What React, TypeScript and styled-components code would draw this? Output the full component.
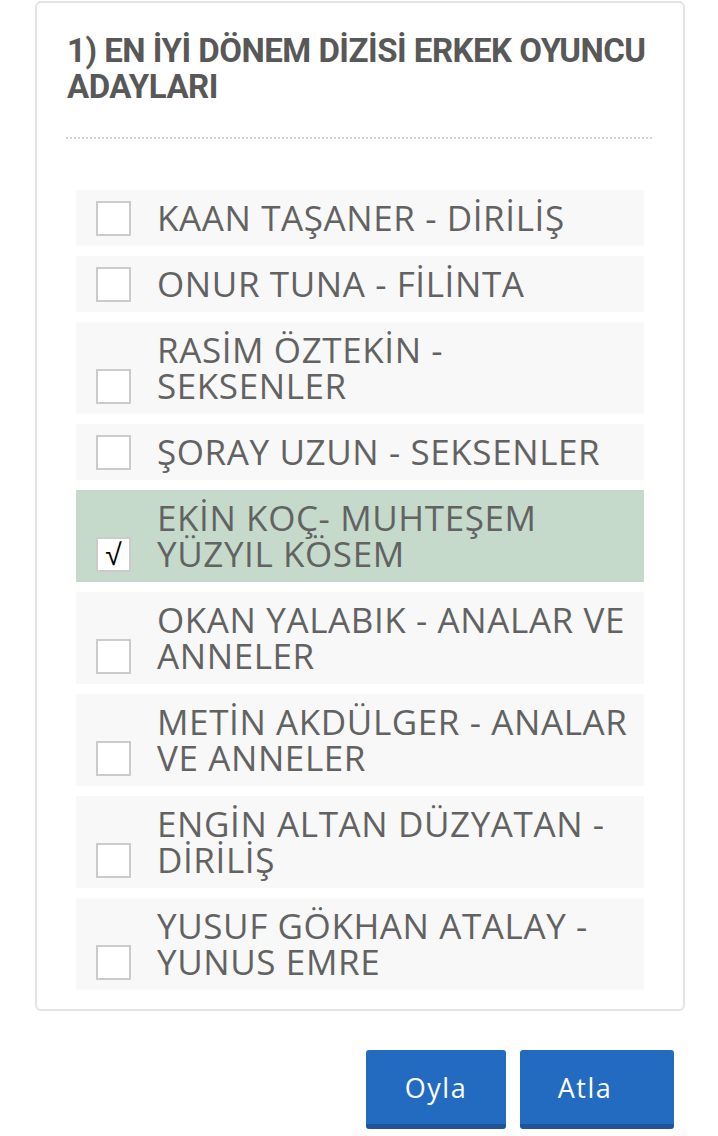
import React, { useState } from "react";
import styled, { createGlobalStyle } from "styled-components";

const Global = createGlobalStyle`
  html, body { margin: 0; padding: 0; background: #fff; }
  * { box-sizing: border-box; }
`;

const Page = styled.div`
  width: 718px;
  padding: 1px 33px 0 35px;
  font-family: "Open Sans", "Noto Sans", sans-serif;
`;

const Card = styled.div`
  border: 2px solid #e4e4e4;
  border-radius: 6px;
  padding: 30px 31px 19px 29px;
  background: #fff;
`;

const Title = styled.h1`
  margin: 0 0 0 1px;
  font-family: Roboto, "Liberation Sans", sans-serif;
  font-weight: 700;
  font-size: 33px;
  line-height: 36px;
  letter-spacing: -0.5px;
  color: #585858;
`;

const Divider = styled.div`
  margin-top: 32px;
  border-top: 2px dotted #d4d4d4;
`;

const List = styled.div`
  display: flex;
  flex-direction: column;
  gap: 10px;
  margin: 51px 8px 0 10px;
`;

const Row = styled.label<{ $selected: boolean }>`
  display: flex;
  align-items: flex-end;
  gap: 26px;
  padding: 10px 12px 10px 20px;
  background: ${(p) => (p.$selected ? "#c5dacb" : "#f8f8f8")};
  cursor: pointer;
`;

const Box = styled.span`
  flex: 0 0 auto;
  width: 35px;
  height: 35px;
  border: 2px solid #cbcbcb;
  background: #fff;
  display: flex;
  align-items: center;
  justify-content: center;
  font-family: "Liberation Sans", sans-serif;
  font-size: 30px;
  line-height: 1;
  color: #000;
`;

const Label = styled.span`
  font-size: 35px;
  line-height: 36px;
  color: #626262;
  letter-spacing: 0.6px;
`;

const Actions = styled.div`
  display: flex;
  justify-content: flex-end;
  gap: 14px;
  margin: 39px 11px 0 0;
`;

const Button = styled.button<{ $w: number; $shift?: number }>`
  width: ${(p) => p.$w}px;
  height: 79px;
  border: none;
  border-bottom: 5px solid #1d5598;
  border-radius: 3px;
  background: #236bc1;
  color: #fff;
  font-family: "Open Sans", "Noto Sans", sans-serif;
  font-size: 27px;
  letter-spacing: 1.5px;
  padding: 0 ${(p) => p.$shift ?? 0}px 0 0;
  cursor: pointer;
`;

const items = [
  "KAAN TAŞANER - DİRİLİŞ",
  "ONUR TUNA - FİLİNTA",
  "RASİM ÖZTEKİN - SEKSENLER",
  "ŞORAY UZUN - SEKSENLER",
  "EKİN KOÇ- MUHTEŞEM YÜZYIL KÖSEM",
  "OKAN YALABIK - ANALAR VE ANNELER",
  "METİN AKDÜLGER - ANALAR VE ANNELER",
  "ENGİN ALTAN DÜZYATAN - DİRİLİŞ",
  "YUSUF GÖKHAN ATALAY - YUNUS EMRE",
];

export default function App() {
  const [sel, setSel] = useState(4);
  return (
    <>
      <Global />
      <Page>
        <Card>
          <Title>1) EN İYİ DÖNEM DİZİSİ ERKEK OYUNCU ADAYLARI</Title>
          <Divider />
          <List>
            {items.map((t, i) => (
              <Row key={t} $selected={i === sel} onClick={() => setSel(i)}>
                <Box>{i === sel ? "√" : ""}</Box>
                <Label>{t}</Label>
              </Row>
            ))}
          </List>
        </Card>
        <Actions>
          <Button $w={140}>Oyla</Button>
          <Button $w={154} $shift={24}>Atla</Button>
        </Actions>
      </Page>
    </>
  );
}
